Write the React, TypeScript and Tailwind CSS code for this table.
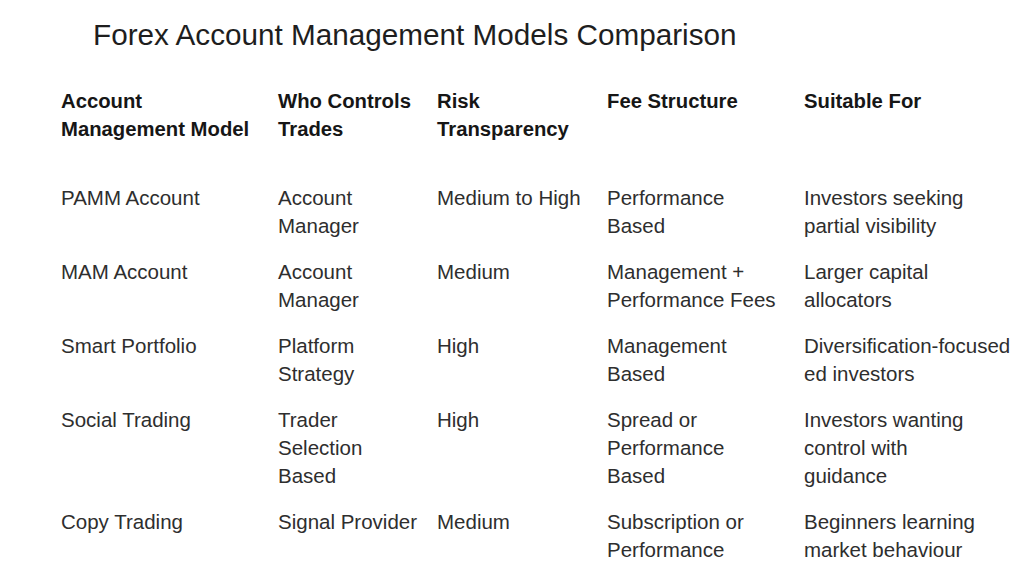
import React from "react";

const header: string[][] = [
  ["Account", "Management Model"],
  ["Who Controls", "Trades"],
  ["Risk", "Transparency"],
  ["Fee Structure"],
  ["Suitable For"],
];

const rows: string[][][] = [
  [["PAMM Account"], ["Account", "Manager"], ["Medium to High"], ["Performance", "Based"], ["Investors seeking", "partial visibility"]],
  [["MAM Account"], ["Account", "Manager"], ["Medium"], ["Management +", "Performance Fees"], ["Larger capital", "allocators"]],
  [["Smart Portfolio"], ["Platform", "Strategy"], ["High"], ["Management", "Based"], ["Diversification-focused", "ed investors"]],
  [["Social Trading"], ["Trader", "Selection", "Based"], ["High"], ["Spread or", "Performance", "Based"], ["Investors wanting", "control with", "guidance"]],
  [["Copy Trading"], ["Signal Provider"], ["Medium"], ["Subscription or", "Performance"], ["Beginners learning", "market behaviour"]],
];

function Cell({ lines, className }: { lines: string[]; className: string }) {
  return (
    <div className={className}>
      {lines.map((l, i) => (
        <div key={i} className="whitespace-nowrap">
          {l}
        </div>
      ))}
    </div>
  );
}

export default function App() {
  return (
    <div
      className="w-[1024px] h-[585px] bg-white overflow-hidden"
      style={{ fontFamily: '"Liberation Sans", Arial, sans-serif' }}
    >
      <h1 className="pt-[17px] pl-[93px] text-[29.7px] leading-[36px] text-[#1e1e1e] font-normal">
        Forex Account Management Models Comparison
      </h1>
      <div className="mt-[34px] pl-[61px] grid grid-cols-[217px_159px_170px_197px_1fr] leading-[28px]">
        {header.map((h, i) => (
          <Cell key={i} lines={h} className="text-[20.3px] font-bold text-[#161616] pb-[41px]" />
        ))}
        {rows.map((r, ri) =>
          r.map((c, ci) => (
            <Cell key={`${ri}-${ci}`} lines={c} className="text-[20.5px] text-[#2e2e2e] pb-[18px]" />
          ))
        )}
      </div>
    </div>
  );
}
